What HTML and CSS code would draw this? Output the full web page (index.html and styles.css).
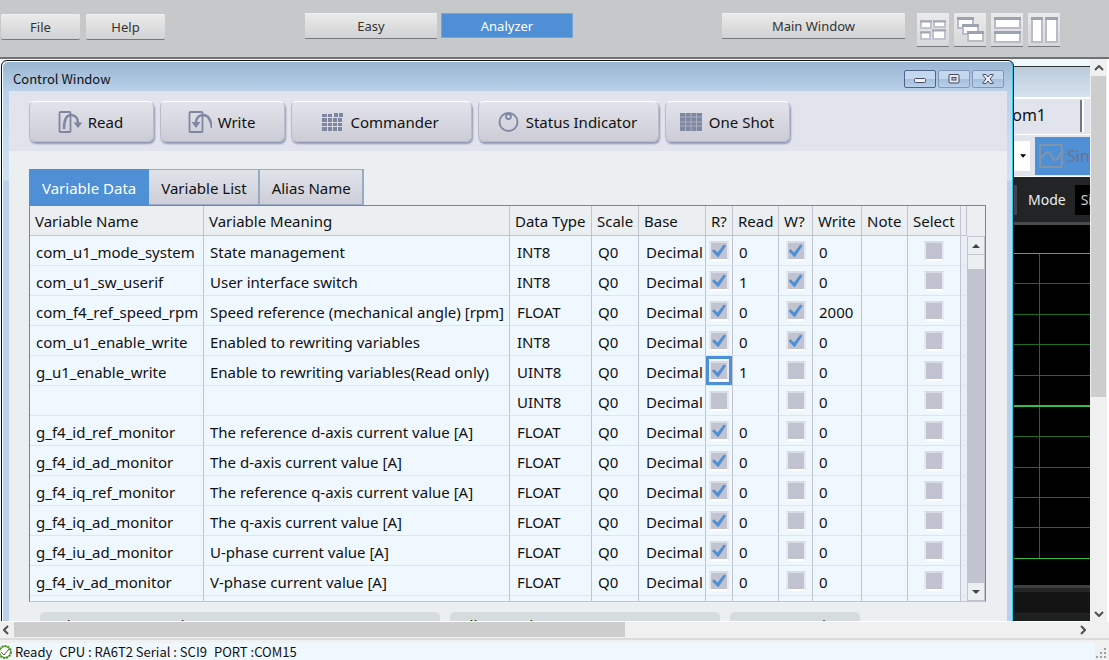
FILE: index.html
```
<!DOCTYPE html>
<html lang="en">
<head>
<meta charset="utf-8">
<title>Control Window</title>
<link rel="stylesheet" href="styles.css">
</head>
<body>
<header class="toolbar">
  <div class="menu">
    <button class="bar-button">File</button>
    <button class="bar-button">Help</button>
  </div>
  <div class="modes">
    <button class="bar-button wide">Easy</button>
    <button class="bar-button wide active">Analyzer</button>
  </div>
  <div class="windows">
    <button class="bar-button main-window">Main Window</button>
    <div class="layouts">
      <button class="layout-button" aria-label="Tile windows"><svg viewBox="0 0 32 32"><g fill="#fff" stroke="#c0c3cd" stroke-width="2"><rect x="4" y="7" width="10" height="7"/><rect x="17" y="7" width="11" height="6"/><rect x="4" y="18" width="9" height="7"/><rect x="16" y="16" width="12" height="9"/></g><path d="M3 7.500h12M16 7.500h13M3 18.500h10M15 16.500h14" stroke="#a3a7b6" stroke-width="2"/></svg></button>
      <button class="layout-button" aria-label="Cascade windows"><svg viewBox="0 0 32 32"><g fill="#fff" stroke="#b9bcc8" stroke-width="2"><rect x="4" y="4" width="15" height="10"/><rect x="9" y="11" width="15" height="9"/><rect x="14" y="18" width="15" height="9"/></g><path d="M3 4.500h17M8 11.500h17M13 18.500h17" stroke="#9da2b3" stroke-width="3"/></svg></button>
      <button class="layout-button" aria-label="Stack windows"><svg viewBox="0 0 32 32"><g fill="#fff" stroke="#b9bcc8" stroke-width="2"><rect x="4" y="4" width="25" height="10"/><rect x="4" y="18" width="25" height="10"/></g><path d="M3 4.500h27M3 18.500h27" stroke="#9da2b3" stroke-width="3"/></svg></button>
      <button class="layout-button" aria-label="Place windows side by side"><svg viewBox="0 0 32 32"><g fill="#fff" stroke="#b9bcc8" stroke-width="2"><rect x="4" y="4" width="10" height="24"/><rect x="18" y="4" width="11" height="24"/></g><path d="M3 4.500h12M17 4.500h13" stroke="#9da2b3" stroke-width="3"/></svg></button>
    </div>
  </div>
</header>

<main class="workspace">
  <div class="desktop">
    <section class="scope" aria-label="Scope Window">
      <div class="scope-title"></div>
      <div class="scope-tabs"><button class="scope-tab">Zoom1</button><span class="scope-tab-rest"></span></div>
      <div class="scope-tools">
        <button class="scope-combo" aria-label="Channel"><svg viewBox="0 0 8 4"><path d="M0 0h7L3.500 4z"/></svg></button>
        <button class="scope-single"><svg viewBox="0 0 24 24" fill="none" stroke="#8494a8" stroke-width="2"><rect x="1" y="1" width="22" height="22" rx="1"/><path d="M2 14C5 12 6 8 9 8s4 8 7 8 4-5 6-7"/></svg>Single</button>
      </div>
      <div class="scope-mode"><span class="scope-field"></span><span>Mode</span><span class="scope-value">Single</span></div>
      <svg class="plot" viewBox="0 0 130 360" preserveAspectRatio="xMinYMin slice" fill="none">
        <path d="M0 58.500h130M0 89.500h130M0 119.500h130M0 150.500h130M0 211.500h130M0 242.500h130M0 272.500h130M0 302.500h130M79.500 28v305" stroke="#1d6e1f"/>
        <path d="M0 28.500h130M0 333.500h130" stroke="#34c234"/>
        <path d="M0 181h130" stroke="#34c234" stroke-width="2"/>
      </svg>
      <div class="scope-foot"></div>
    </section>

    <section class="control" aria-label="Control Window">
      <div class="title">
        <h1>Control Window</h1>
        <button class="caption first" aria-label="Minimize"><svg viewBox="0 0 14 12"><rect x="1.500" y="5.500" width="11" height="4" rx="1" fill="#f2f2f2" stroke="#444a60"/></svg></button>
        <button class="caption" aria-label="Restore"><svg viewBox="0 0 14 12"><rect x="2" y="1.500" width="10" height="8.500" rx="1" fill="#e6e8ec" stroke="#444a60"/><rect x="5" y="4.500" width="4" height="2.500" fill="#b9cfe6" stroke="#444a60"/></svg></button>
        <button class="caption" aria-label="Close"><svg viewBox="0 0 14 12"><path d="M2 1.500h3l2 2.500 2-2.500h3v1L9 6l3 3.500v1H9L7 8l-2 2.500H2v-1L5 6 2 2.500z" fill="#eceef2" stroke="#444a60"/></svg></button>
      </div>
      <div class="client">
        <div class="actions">
          <button class="action"><svg viewBox="0 0 24 24" fill="none" stroke="#7f869f" stroke-width="1.800"><rect x="1.500" y="2" width="11" height="20" rx="1"/><path d="M6 19C6 10 8 5 13 5c4 0 7 3 7 8" stroke-width="2.500"/><path d="M15.500 12.500h9L20 18z" fill="#7f869f" stroke="none"/></svg>Read</button>
          <button class="action"><svg viewBox="0 0 24 24" fill="none" stroke="#7f869f" stroke-width="1.800"><rect x="1.500" y="2" width="13" height="20" rx="1"/><path d="M24 18C23 9 20 5 15 5c-4 0-7 3-7 8" stroke-width="2.500"/><path d="M3.500 12h9L8 18z" fill="#7f869f" stroke="none"/></svg>Write</button>
          <button class="action long"><svg viewBox="0 0 24 24" fill="#7f869f"><path d="M2 4h5v3H2zM8 4h4v3H8zM14 3h4v4h-4zM19 3h4v4h-4zM2 8h5v4H2zM8 8h4v4H8zM13 8h4v4h-4zM18 8h4v4h-4zM2 13h5v3H2zM8 13h4v3H8zM13 13h4v3h-4zM18 13h4v3h-4zM2 17h5v4H2zM8 17h4v4H8zM13 17h4v4h-4zM18 17h4v4h-4z"/></svg>Commander</button>
          <button class="action long"><svg viewBox="0 0 24 24" fill="none" stroke="#7f869f" stroke-width="1.800"><circle cx="12.500" cy="12" r="9"/><circle cx="12.500" cy="6.500" r="2.500"/></svg>Status Indicator</button>
          <button class="action"><svg viewBox="0 0 24 24"><path d="M1 3h22v18H1z" fill="#7f869f"/><path d="M1 7h22M1 12h22M1 16h22M6.500 3v18M12 3v18M17.500 3v18" stroke="#a9aec2"/></svg>One Shot</button>
        </div>
        <div class="content">
          <div class="tabs" role="tablist">
            <button class="tab selected" role="tab" aria-selected="true">Variable Data</button>
            <button class="tab" role="tab">Variable List</button>
            <button class="tab" role="tab">Alias Name</button>
          </div>
          <div class="grid">
            <table>
              <colgroup><col class="c-name"><col class="c-meaning"><col class="c-type"><col class="c-scale"><col class="c-base"><col class="c-r"><col class="c-read"><col class="c-w"><col class="c-write"><col class="c-note"><col class="c-select"><col class="c-rest"></colgroup>
              <thead><tr><th>Variable Name</th><th>Variable Meaning</th><th>Data Type</th><th>Scale</th><th>Base</th><th>R?</th><th>Read</th><th>W?</th><th>Write</th><th>Note</th><th>Select</th><th></th></tr></thead>
              <tbody>
                <tr><td>com_u1_mode_system</td><td>State management</td><td>INT8</td><td>Q0</td><td>Decimal</td><td><input type="checkbox" aria-label="Read" checked></td><td>0</td><td><input type="checkbox" aria-label="Write" checked></td><td>0</td><td></td><td><input type="checkbox" aria-label="Select"></td><td></td></tr>
                <tr><td>com_u1_sw_userif</td><td>User interface switch</td><td>INT8</td><td>Q0</td><td>Decimal</td><td><input type="checkbox" aria-label="Read" checked></td><td>1</td><td><input type="checkbox" aria-label="Write" checked></td><td>0</td><td></td><td><input type="checkbox" aria-label="Select"></td><td></td></tr>
                <tr><td>com_f4_ref_speed_rpm</td><td>Speed reference (mechanical angle) [rpm]</td><td>FLOAT</td><td>Q0</td><td>Decimal</td><td><input type="checkbox" aria-label="Read" checked></td><td>0</td><td><input type="checkbox" aria-label="Write" checked></td><td>2000</td><td></td><td><input type="checkbox" aria-label="Select"></td><td></td></tr>
                <tr><td>com_u1_enable_write</td><td>Enabled to rewriting variables</td><td>INT8</td><td>Q0</td><td>Decimal</td><td><input type="checkbox" aria-label="Read" checked></td><td>0</td><td><input type="checkbox" aria-label="Write" checked></td><td>0</td><td></td><td><input type="checkbox" aria-label="Select"></td><td></td></tr>
                <tr><td>g_u1_enable_write</td><td>Enable to rewriting variables(Read only)</td><td>UINT8</td><td>Q0</td><td>Decimal</td><td class="current"><input type="checkbox" aria-label="Read" checked></td><td>1</td><td><input type="checkbox" aria-label="Write"></td><td>0</td><td></td><td><input type="checkbox" aria-label="Select"></td><td></td></tr>
                <tr><td></td><td></td><td>UINT8</td><td>Q0</td><td>Decimal</td><td><input type="checkbox" aria-label="Read"></td><td></td><td><input type="checkbox" aria-label="Write"></td><td>0</td><td></td><td><input type="checkbox" aria-label="Select"></td><td></td></tr>
                <tr><td>g_f4_id_ref_monitor</td><td>The reference d-axis current value [A]</td><td>FLOAT</td><td>Q0</td><td>Decimal</td><td><input type="checkbox" aria-label="Read" checked></td><td>0</td><td><input type="checkbox" aria-label="Write"></td><td>0</td><td></td><td><input type="checkbox" aria-label="Select"></td><td></td></tr>
                <tr><td>g_f4_id_ad_monitor</td><td>The d-axis current value [A]</td><td>FLOAT</td><td>Q0</td><td>Decimal</td><td><input type="checkbox" aria-label="Read" checked></td><td>0</td><td><input type="checkbox" aria-label="Write"></td><td>0</td><td></td><td><input type="checkbox" aria-label="Select"></td><td></td></tr>
                <tr><td>g_f4_iq_ref_monitor</td><td>The reference q-axis current value [A]</td><td>FLOAT</td><td>Q0</td><td>Decimal</td><td><input type="checkbox" aria-label="Read" checked></td><td>0</td><td><input type="checkbox" aria-label="Write"></td><td>0</td><td></td><td><input type="checkbox" aria-label="Select"></td><td></td></tr>
                <tr><td>g_f4_iq_ad_monitor</td><td>The q-axis current value [A]</td><td>FLOAT</td><td>Q0</td><td>Decimal</td><td><input type="checkbox" aria-label="Read" checked></td><td>0</td><td><input type="checkbox" aria-label="Write"></td><td>0</td><td></td><td><input type="checkbox" aria-label="Select"></td><td></td></tr>
                <tr><td>g_f4_iu_ad_monitor</td><td>U-phase current value [A]</td><td>FLOAT</td><td>Q0</td><td>Decimal</td><td><input type="checkbox" aria-label="Read" checked></td><td>0</td><td><input type="checkbox" aria-label="Write"></td><td>0</td><td></td><td><input type="checkbox" aria-label="Select"></td><td></td></tr>
                <tr><td>g_f4_iv_ad_monitor</td><td>V-phase current value [A]</td><td>FLOAT</td><td>Q0</td><td>Decimal</td><td><input type="checkbox" aria-label="Read" checked></td><td>0</td><td><input type="checkbox" aria-label="Write"></td><td>0</td><td></td><td><input type="checkbox" aria-label="Select"></td><td></td></tr>
                <tr class="partial"><td></td><td></td><td></td><td></td><td></td><td></td><td></td><td></td><td></td><td></td><td></td><td></td></tr>
              </tbody>
            </table>
            <div class="grid-scroll">
              <button aria-label="Scroll rows up"><svg viewBox="0 0 8 4"><path d="M0 4L4 0l4 4z"/></svg></button>
              <div class="grid-thumb"></div>
              <button class="down" aria-label="Scroll rows down"><svg viewBox="0 0 8 4"><path d="M0 0h8L4 4z"/></svg></button>
            </div>
          </div>
          <div class="groups">
            <div class="group select-data">Select Data Control</div>
            <div class="group all-data">All Control</div>
            <div class="group row-data">Row Control</div>
          </div>
        </div>
      </div>
    </section>
  </div>
  <div class="scroll vertical">
    <button aria-label="Scroll up"><svg viewBox="0 0 10 6"><path d="M1 5l4-4 4 4"/></svg></button>
    <div class="thumb"></div>
    <button class="end" aria-label="Scroll down"><svg viewBox="0 0 10 6"><path d="M1 1l4 4 4-4"/></svg></button>
  </div>
  <div class="scroll horizontal">
    <button aria-label="Scroll left"><svg class="side" viewBox="0 0 6 10"><path d="M5 1L1 5l4 4"/></svg></button>
    <div class="thumb"></div>
    <button class="end" aria-label="Scroll right"><svg class="side" viewBox="0 0 6 10"><path d="M1 1l4 4-4 4"/></svg></button>
  </div>
</main>

<footer class="status">
  <svg class="ok" viewBox="0 0 16 16" fill="none"><circle cx="5" cy="8" r="6" fill="#fff" stroke="#5c9c2c" stroke-width="2" stroke-dasharray="2 1"/><circle cx="5" cy="8" r="5.500" stroke="#4f8a28"/><path d="M1 8l3 3 5-6" stroke="#555"/></svg>
  <span>Ready</span><span>CPU : RA6T2 Serial : SCI9</span><span>PORT :COM15</span>
  <svg class="grip" viewBox="0 0 14 17" fill="#a0a0a0"><path d="M9 5h2v2H9zM5 9h2v2H5zM9 9h2v2H9zM1 13h2v2H1zM5 13h2v2H5zM9 13h2v2H9z"/></svg>
</footer>
</body>
</html>
```
FILE: styles.css
```
* { box-sizing: border-box; }

body {
  margin: 0;
  height: 100vh;
  display: flex;
  flex-direction: column;
  overflow: hidden;
  background: #eff7ff;
  color: #111;
  font: 15px/20px "Noto Sans", "Open Sans", sans-serif;
}

button {
  font: inherit;
  color: inherit;
  margin: 0;
  padding: 0;
  border: 0;
}

svg { display: block; flex: none; }

/* Application toolbar */
.toolbar {
  flex: none;
  display: flex;
  justify-content: space-between;
  align-items: flex-start;
  height: 59px;
  padding: 13px 49px 0 1px;
  background: #c7c8ca;
  border-bottom: 2px solid #707173;
  font-size: 13px;
}

.menu, .modes, .windows, .layouts { display: flex; }
.menu { gap: 6px; padding-top: 1px; }
.modes { gap: 4px; margin-left: -9px; }
.windows { gap: 12px; }
.layouts { gap: 5px; }

.bar-button {
  width: 79px;
  height: 26px;
  border-bottom: 1px solid #77787b;
  border-radius: 2px;
  background: linear-gradient(#ebebeb, #d1d2d3);
  box-shadow: inset 0 1px #f0f0f0;
  color: #333;
}
.bar-button.wide { width: 132px; border-radius: 0; }
.bar-button.main-window { width: 183px; border-radius: 0; }
.bar-button.active {
  height: 25px;
  background: #4f8fd5;
  border: 1px solid #79a5d8;
  box-shadow: none;
  color: #fff;
}

.layout-button {
  width: 32px;
  height: 34px;
  border-bottom: 1px solid #77787b;
  background: linear-gradient(#ebebeb, #d6d7d8);
}
.layout-button svg { width: 32px; height: 32px; }

/* Workspace with outer scroll bars */
.workspace {
  flex: 1;
  min-height: 0;
  display: grid;
  grid-template-columns: 1fr 19px;
  grid-template-rows: 1fr 18px;
}
.desktop {
  position: relative;
  overflow: hidden;
  border-bottom: 1px solid #fff;
}

.scroll {
  display: flex;
  background: #f0f0f0;
}
.scroll button {
  display: grid;
  place-items: center;
  flex: none;
  width: 17px;
  height: 17px;
  background: #f0f0f0;
}
.scroll svg { width: 10px; height: 6px; fill: none; stroke: #505050; stroke-width: 2; }
.scroll svg.side { width: 6px; height: 10px; }
.scroll .thumb { background: #cdcdcd; }
.scroll .end { margin: auto 0 0; }
.vertical { flex-direction: column; border-right: 2px solid #fff; }
.vertical .thumb { width: 15px; height: 57%; margin-left: 1px; }
.horizontal {
  grid-column: 1 / 3;
  padding-right: 18px;
  border-bottom: 2px solid #dcdcdc;
}
.horizontal button { height: 15px; }
.horizontal button:first-child { width: 14px; padding-right: 3px; }
.horizontal .thumb { width: 56%; height: 15px; }
.horizontal .end { margin: 0 0 0 auto; }

/* Scope window, behind */
.scope {
  position: absolute;
  top: 7px;
  right: 0;
  bottom: 0;
  width: 130px;
  display: flex;
  flex-direction: column;
  border-top: 1px solid #333;
}
.scope-title {
  flex: none;
  height: 30px;
  background: linear-gradient(#bccbd9, #d5e3f1);
}
.scope-tabs {
  flex: none;
  display: flex;
  height: 38px;
  padding: 1px 0 2px;
  border-top: 2px solid #fff;
  border-bottom: 1px solid #fff;
  background: #e2e4ed;
}
.scope-tab {
  width: 122px;
  padding: 0 34px 2px 0;
  border-right: 2px solid #77787b;
  background: #e2e4ed;
  font-size: 16px;
  text-align: right;
}
.scope-tab-rest { flex: 1; border-left: 2px solid #fff; }
.scope-tools {
  flex: none;
  display: flex;
  align-items: center;
  height: 42px;
  gap: 5px;
  background: #e2e4ed;
  border-bottom: 1px solid #fff;
}
.scope-combo {
  width: 70px;
  height: 30px;
  padding-left: 60px;
  background: #fff;
}
.scope-combo svg { width: 7px; height: 4px; }
.scope-single {
  flex: 1;
  display: flex;
  align-items: center;
  gap: 4px;
  height: 38px;
  padding-left: 4px;
  overflow: hidden;
  background: #4f8fd5;
  color: #6b7580;
  font-size: 16px;
}
.scope-single svg { width: 24px; height: 24px; }
.scope-mode {
  flex: none;
  display: flex;
  align-items: center;
  gap: 11px;
  height: 48px;
  overflow: hidden;
  background: #222426;
  border-bottom: 3px solid #4a4b4c;
  color: #eee;
  font-size: 14px;
}
.scope-field { width: 57px; height: 30px; flex: none; background: #444548; }
.scope-value {
  flex: none;
  width: 60px;
  margin-left: -2px;
  padding: 5px 6px;
  background: #000;
  color: #ccc;
}
.plot { width: 100%; height: 360px; background: #000; }
.scope-foot {
  flex: 1;
  border-top: 3px solid #404040;
  background: linear-gradient(#242628 4px, #141414 4px, #141414 25px, #2a2a2a 25px, #1d1f20 26px);
}

/* Control window, in front */
.control {
  position: absolute;
  top: 1px;
  left: 1px;
  width: 1013px;
  height: 640px;
  display: flex;
  flex-direction: column;
  padding: 0 6px 6px;
  border: 1px solid #111;
  border-radius: 6px 6px 0 0;
  background: linear-gradient(#99b4d1, #b9d1ea 30px, #d0e3f2 119px, #b9d1ea 120px);
  box-shadow: inset 1px 1px #fff, inset -1px 0 #35c8ee;
}
.title {
  flex: none;
  display: flex;
  align-items: center;
  gap: 2px;
  height: 30px;
  padding: 6px 3px 0 5px;
  font: 13px/18px "Noto Sans CJK SC", "Noto Sans", sans-serif;
}
.title h1 { flex: 1; margin: 0; font: inherit; }
.caption {
  display: grid;
  place-items: center;
  width: 32px;
  height: 18px;
  border: 1px solid #8298b8;
  border-radius: 2px;
  background: linear-gradient(#c3d7ee, #c3d7ee 50%, #a5bfdf 50%, #b9cfea);
}
.caption.first { border-color: #50648c; }
.caption svg { width: 14px; height: 12px; }
.client {
  flex: 1;
  display: flex;
  flex-direction: column;
  margin-left: 1px;
  background: #ebeff2;
}
.actions {
  flex: none;
  display: flex;
  gap: 6px;
  padding: 10px 20px 9px;
  background: #e2e4ed;
}
.action {
  display: flex;
  align-items: center;
  justify-content: center;
  gap: 6px;
  width: 125px;
  height: 41px;
  padding-right: 2px;
  border: 1px solid #b9bbc7;
  border-top-color: #fff;
  border-radius: 6px;
  background: linear-gradient(#e2e3eb, #cbccd5);
  box-shadow: 1px 2px 2px #8e96b4;
}
.action.long { width: 181px; padding-right: 4px; }
.action svg { width: 24px; height: 24px; }

.content { padding: 18px 20px 0; }
.tabs { display: flex; }
.tab {
  height: 36px;
  padding: 2px 11px 0 12px;
  border: 1px solid #9aaac6;
  border-width: 1px 2px 1px 0;
  background: linear-gradient(#e1e3eb, #cdced7);
}
.tab.selected {
  padding: 2px 12px 0 13px;
  border-width: 1px 1px 1px 0;
  border-color: #4f8fd5;
  background: #4f8fd5;
  color: #fff;
}
.grid {
  display: flex;
  width: 957px;
  border: 1px solid #4f8fd5;
  border-bottom-color: #c2c3d0;
}
table {
  flex: 1;
  border-collapse: separate;
  border-spacing: 0;
  table-layout: fixed;
  width: 937px;
}
.c-name { width: 174px; }
.c-meaning { width: 306px; }
.c-type { width: 82px; }
.c-scale { width: 47px; }
.c-base { width: 67px; }
.c-r { width: 27px; }
.c-read { width: 46px; }
.c-w { width: 34px; }
.c-write { width: 49px; }
.c-note { width: 46px; }
.c-select { width: 53px; }
.c-rest { width: 6px; }
th {
  height: 30px;
  padding: 0 0 0 5px;
  border-right: 1px solid #c2c3d0;
  border-bottom: 1px solid #c2c3d0;
  font-weight: normal;
  text-align: left;
  white-space: nowrap;
}
td {
  height: 30px;
  padding: 2px 0 0 6px;
  border-right: 1px solid #c2c3d0;
  border-bottom: 1px solid #e2e4ed;
  background: #eff7ff;
  white-space: nowrap;
}
td:nth-child(3), td:nth-child(5) { padding-left: 7px; }
td:nth-child(6), td:nth-child(8), td:nth-child(11) { padding: 0; text-align: center; }
td:last-child, th:last-child { padding: 0; }
td:last-child { border-right: 0; background: #e9edf4; }
.partial td { height: 5px; padding: 0; border-bottom: 0; }
td.current { box-shadow: inset 0 0 0 3px #4f8fd5; }

td input {
  appearance: none;
  display: inline-grid;
  width: 20px;
  height: 20px;
  margin: 0;
  vertical-align: middle;
  border: 2px solid #fff;
  border-top-color: #d9dce6;
  border-left-color: #e6e9f0;
  border-right-color: #e6e9f0;
  background: #c2c3d0;
}
td input:checked::before {
  content: "";
  width: 14px;
  height: 13px;
  margin: 1px;
  background: #4f8fd5;
  clip-path: polygon(0 50%, 14% 36%, 40% 62%, 84% 0, 100% 10%, 44% 100%);
}

.grid-scroll {
  flex: none;
  display: flex;
  flex-direction: column;
  width: 18px;
  margin-top: 30px;
  background: #c2c3d0;
}
.grid-scroll button {
  display: grid;
  place-items: center;
  height: 17px;
  margin: 1px;
  background: #ebeff2;
}
.grid-scroll svg { width: 8px; height: 4px; fill: #444; }
.grid-scroll .down { margin-top: auto; }
.grid-thumb { height: 14px; margin: 0 1px; background: #ebeff2; }

.groups { display: flex; gap: 10px; padding: 10px 11px 0; }
.group {
  height: 60px;
  padding: 4px 10px;
  border-radius: 5px;
  background: #d6dbde;
}
.select-data { width: 400px; }
.all-data { width: 270px; }
.row-data { width: 130px; }

.group { line-height: 18px; }

/* Status bar */
.status {
  flex: none;
  display: flex;
  align-items: center;
  gap: 7px;
  height: 20px;
  border-top: 3px solid #f0f0f0;
  font: 13px/17px "Noto Sans CJK SC", "Noto Sans", sans-serif;
}
.ok { width: 16px; height: 16px; margin-right: -8px; }
.grip { width: 14px; height: 17px; margin-left: auto; background: #f0f0f0; }
```
